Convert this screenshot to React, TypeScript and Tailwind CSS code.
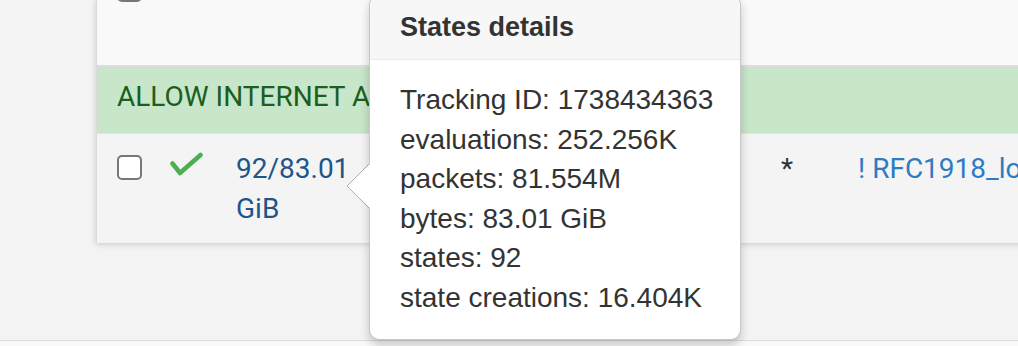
import React from 'react';

const details = [
  'Tracking ID: 1738434363',
  'evaluations: 252.256K',
  'packets: 81.554M',
  'bytes: 83.01 GiB',
  'states: 92',
  'state creations: 16.404K',
];

const Checkbox = ({ className = '' }: { className?: string }) => (
  <div className={`w-[25px] h-[25px] rounded-[5px] border-2 border-[#777] bg-white ${className}`} />
);

const StatesPopover = () => (
  <div className="absolute left-[369px] top-[-5px] w-[372px] rounded-[10px] border border-[rgba(0,0,0,0.22)] bg-white shadow-[0_5px_10px_rgba(0,0,0,0.2)] font-['Liberation_Sans',Arial,sans-serif] text-[#333]">
    <svg className="absolute left-[-24px] top-[168px]" width="24" height="44" viewBox="0 0 24 44">
      <polygon points="24,0 1,22 24,44" fill="#fff" />
      <polyline points="23,0 1,22 23,44" fill="none" stroke="rgba(0,0,0,0.28)" strokeWidth="1" />
    </svg>
    <div className="rounded-t-[10px] border-b border-[#ebebeb] bg-[#f7f7f7] pl-[30px] pt-[16px] pb-[17px] text-[27px] leading-[30px] font-bold">
      States details
    </div>
    <div className="pl-[30px] pt-[20px] pb-[21px] text-[28px] leading-[39.6px]">
      {details.map((line) => (
        <div key={line}>{line}</div>
      ))}
    </div>
  </div>
);

const App = () => {
  return (
    <div className="relative w-[1018px] h-[346px] overflow-hidden bg-[#f3f3f3] flex flex-col font-['Roboto',sans-serif]">
      <div className="ml-[96px] w-[1000px] bg-[#f4f4f4] shadow-[0_1px_6px_rgba(0,0,0,0.18)] border-l border-[#dadada]">
        <div className="h-[67px] flex items-start bg-[#f9f9f9] border-b-2 border-[#dddddd] pl-[20px]">
          <Checkbox className="-mt-[23px]" />
        </div>
        <div className="h-[66px] bg-[#c8e6c9] pl-[20px] pt-[10px] text-[28px] leading-[40px] text-[#1b5e20] whitespace-nowrap overflow-hidden">
          ALLOW INTERNET ACCESS
        </div>
        <div className="h-[110px] border-t border-[#e2e2e2] flex pt-[15px] text-[28px] leading-[40px]">
          <div className="w-[59px] pl-[20px] pt-[6px]">
            <Checkbox />
          </div>
          <div className="w-[65px] pl-[14px] pt-[3px]">
            <svg width="34" height="26" viewBox="0 0 34 26">
              <path d="M2.5 11.5 L10 21 L30.5 3" fill="none" stroke="#4caf50" strokeWidth="4.5" strokeLinecap="round" strokeLinejoin="round" />
            </svg>
          </div>
          <div className="w-[135px] pl-[15px] pr-[5px] text-[#20558a]">92/83.01 GiB</div>
          <div className="w-[425px] pl-[425px] text-[#333]">*</div>
          <div className="w-[77px]" />
          <div className="flex-1 text-[#2f7bc1] whitespace-nowrap overflow-hidden">! RFC1918_local</div>
        </div>
      </div>
      <div className="flex-1" />
      <div className="h-[6px] border-t border-[#dddddd] bg-[#f9f9f9]" />
      <StatesPopover />
    </div>
  );
};

export default App;
